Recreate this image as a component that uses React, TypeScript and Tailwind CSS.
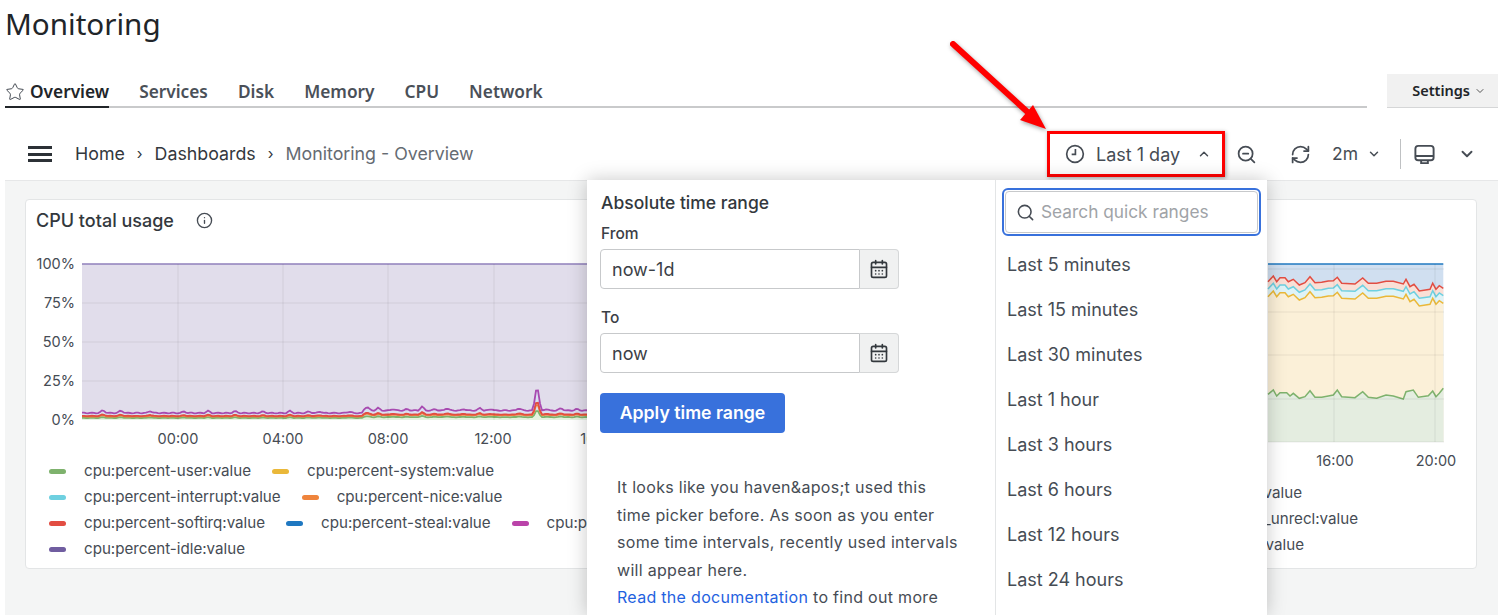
import React from 'react';
import { CalendarDays, ChevronDown, ChevronUp, Info, RefreshCw, Search, Star, ZoomOut } from 'lucide-react';

const tabs = ['Services', 'Disk', 'Memory', 'CPU', 'Network'];
const quickRanges = ['Last 5 minutes', 'Last 15 minutes', 'Last 30 minutes', 'Last 1 hour', 'Last 3 hours', 'Last 6 hours', 'Last 12 hours', 'Last 24 hours'];

const leftLegend = [
    ['#7eb26d', 'cpu:percent-user:value'],
    ['#eab839', 'cpu:percent-system:value'],
    ['#6ed0e0', 'cpu:percent-interrupt:value'],
    ['#ef843c', 'cpu:percent-nice:value'],
    ['#e24d42', 'cpu:percent-softirq:value'],
    ['#1f78c1', 'cpu:percent-steal:value'],
    ['#ba43a9', 'cpu:percent-wait:value'],
    ['#705da0', 'cpu:percent-idle:value'],
];

// bumps of the left chart: [x, height in px]
const bumps: [number, number][] = [
    [103, 3], [121, 2.5], [150, 2], [184, 1.5], [208, 2], [235, 2], [263, 1.5], [290, 2], [309, 1.5], [320, 1.5], [349, 1.5],
    [367, 4], [378, 2.5], [393, 1.5], [407, 1.5], [422, 4], [435, 1.5], [447, 2.5], [464, 1.5], [480, 2.5], [491, 1.5], [519, 2.5], [537, 27], [546, 1.5], [561, 2.5], [577, 1.5],
];

const heightAt = (x: number) => {
    const base = x < 363 ? 7 : 9.5;
    const jitter = 0.4 * Math.sin(x * 0.7);
    return bumps.reduce((h, [bx, bh]) => h + bh * Math.max(0, 1 - Math.abs(x - bx) / 4), base + jitter);
};

const xs: number[] = [];
for (let x = 82; x <= 745; x += 2) xs.push(x);

const line = (k: number) => xs.map((x) => `${x},${(420 - heightAt(x) * k).toFixed(1)}`).join(' ');
const area = (k: number) => `82,420 ${line(k)} 745,420`;

// right chart, traced in a 3x crop: [x, y] of the red and green series
const toPage = (pts: number[][], dy = 0) => pts.map(([x, y]) => `${(1260 + x / 3).toFixed(1)},${(240 + (y + dy) / 3).toFixed(1)}`).join(' ');
const redPts = [[24, 125], [40, 108], [50, 125], [60, 113], [75, 113], [85, 125], [100, 118], [118, 135], [135, 128], [150, 110], [165, 128], [185, 127], [205, 123], [220, 122], [232, 112], [245, 130], [285, 132], [308, 114], [325, 130], [350, 130], [378, 124], [400, 124], [430, 132], [438, 118], [450, 140], [462, 133], [478, 153], [510, 148], [518, 130], [528, 148], [538, 137], [550, 145]];
const greenPts = [[24, 463], [40, 450], [50, 468], [60, 458], [80, 458], [90, 468], [100, 460], [118, 475], [135, 470], [150, 452], [165, 472], [185, 472], [205, 468], [220, 465], [232, 450], [245, 470], [285, 473], [308, 455], [325, 472], [350, 475], [378, 465], [400, 468], [430, 477], [438, 455], [460, 450], [475, 472], [505, 467], [518, 453], [528, 470], [538, 460], [550, 445]];
const band = (pts: string) => `1268,442 ${pts} 1443.3,442`;

const ClockIcon = () => (
    <svg viewBox="0 0 24 24" fill="none" stroke="currentColor" strokeWidth="2" className="h-[20px] w-[20px]">
        <circle cx="12" cy="12" r="10" />
        <path d="M12.5 6v6.5H8" />
    </svg>
);

const PanelIcon = () => (
    <svg viewBox="0 0 24 24" fill="none" stroke="currentColor" strokeWidth="2" className="h-[23px] w-[23px]">
        <rect x="2.5" y="3" width="19" height="15" rx="3" />
        <path d="M2.5 13.5h19M8.5 18v3h7v-3" />
    </svg>
);

const LeftChart = () => (
    <svg viewBox="26 241 720 217" className="block h-[217px] w-[720px]">
        <rect x="82" y="264" width="663" height="156" fill="#e1ddeb" />
        <polygon points={area(1)} fill="#d9e0f1" />
        <polygon points={area(0.3)} fill="#e6f2e0" />
        <polyline points={line(0.3)} fill="none" stroke="#7eb26d" strokeWidth="1.8" />
        <polyline points={line(0.5)} fill="none" stroke="#ef843c" strokeWidth="1.8" />
        <polyline points={line(0.58)} fill="none" stroke="#e24d42" strokeWidth="1.8" />
        <polyline points={line(1)} fill="none" stroke="#a84ab0" strokeWidth="1.8" />
        <line x1="82" x2="745" y1="264" y2="264" stroke="#8f7fbb" strokeWidth="1.5" />
        {[303, 342, 381].map((y) => (
            <line key={y} x1="82" x2="745" y1={y} y2={y} stroke="#000" strokeOpacity="0.07" />
        ))}
        {[178, 283, 388, 494, 599, 704].map((x) => (
            <line key={x} x1={x} x2={x} y1="264" y2="420" stroke="#000" strokeOpacity="0.07" />
        ))}
        {[['100%', 264], ['75%', 303], ['50%', 342], ['25%', 381], ['0%', 420]].map(([t, y]) => (
            <text key={t} x="75" y={Number(y) + 5} textAnchor="end" fontSize="14.5" fill="#464c54">{t}</text>
        ))}
        {[['00:00', 178], ['04:00', 283], ['08:00', 388], ['12:00', 493], ['16:00', 599], ['20:00', 704]].map(([t, x]) => (
            <text key={t} x={x} y="444" textAnchor="middle" fontSize="14.5" fill="#464c54">{t}</text>
        ))}
    </svg>
);

const RightChart = () => (
    <svg viewBox="756 241 720 239" className="block h-[239px] w-[720px]">
        <rect x="1268" y="264" width="175.3" height="178" fill="#d0dff0" />
        <polygon points={band(toPage(redPts))} fill="#fadfd6" />
        <polygon points={band(toPage(redPts, 22))} fill="#dff3f7" />
        <polygon points={band(toPage(redPts, 45))} fill="#fbf0d8" />
        <polygon points={band(toPage(greenPts))} fill="#e4ede0" />
        <line x1="1268" x2="1443.3" y1="264" y2="264" stroke="#1f78c1" strokeWidth="1.5" />
        <polyline points={toPage(redPts)} fill="none" stroke="#e24d42" strokeWidth="1.5" />
        <polyline points={toPage(redPts, 22)} fill="none" stroke="#6ed0e0" strokeWidth="1.5" />
        <polyline points={toPage(redPts, 45)} fill="none" stroke="#eab839" strokeWidth="1.5" />
        <polyline points={toPage(greenPts)} fill="none" stroke="#7eb26d" strokeWidth="1.5" />
        {[269, 312, 355, 399, 442].map((y) => (
            <line key={y} x1="1268" x2="1444" y1={y} y2={y} stroke="#000" strokeOpacity="0.07" />
        ))}
        {[1334, 1435].map((x) => (
            <line key={x} x1={x} x2={x} y1="264" y2="442" stroke="#000" strokeOpacity="0.07" />
        ))}
        <text x="1335" y="466" textAnchor="middle" fontSize="14.5" fill="#464c54">16:00</text>
        <text x="1436" y="466" textAnchor="middle" fontSize="14.5" fill="#464c54">20:00</text>
    </svg>
);

const DateInput = ({ label, value }: { label: string; value: string }) => (
    <div>
        <div className="h-[29px] pl-px text-[15.5px] leading-[27px] font-medium text-[#3b4046]">{label}</div>
        <div className="flex h-10 w-[299px]">
            <div className="flex flex-1 items-center rounded-l-sm border border-[#c7c9cb] bg-white pl-[11px] text-[18px] text-[#3b4046]">{value}</div>
            <div className="flex w-[39px] items-center justify-center rounded-r-sm border border-l-0 border-[#d5d7d8] bg-[#f0f1f1]">
                <CalendarDays className="h-[20px] w-[20px] text-[#33383d]" strokeWidth={2} />
            </div>
        </div>
    </div>
);

const TimePicker = () => (
    <div className="absolute top-[180px] left-[587px] z-10 flex h-[435px] w-[680px] bg-white shadow-[0_0_18px_rgba(0,0,0,0.22)]">
        <div className="w-[408px] pt-[12px] pl-[13px]">
            <div className="pl-px text-[17.5px] leading-[22px] font-medium text-[#33383d]">Absolute time range</div>
            <div className="mt-[6px]"><DateInput label="From" value="now-1d" /></div>
            <div className="mt-[15px]"><DateInput label="To" value="now" /></div>
            <button className="mt-[20px] flex h-10 w-[185px] items-center justify-center rounded-sm bg-[#3871dc] text-[17.7px] font-semibold text-white">Apply time range</button>
            <p className="mt-[41px] pl-[17px] text-[16px] leading-[27.5px] tracking-[0.3px] whitespace-nowrap text-[#464c54]">
                {"It looks like you haven&apos;t used this"}<br />
                time picker before. As soon as you enter<br />
                some time intervals, recently used intervals<br />
                will appear here.<br />
                <span className="text-[#1f62e0]">Read the documentation</span> to find out more
            </p>
        </div>
        <div className="flex-1 border-l border-[#e3e5e6] pt-[8px] pl-[6px]">
            <div className="h-[48px] w-[259px] rounded-md border-2 border-[#3871dc] p-[1px]">
                <div className="flex h-full items-center gap-[6px] rounded-sm border border-[#c7c9cb] pl-[10px]">
                    <Search className="h-[19px] w-[19px] text-[#464c54]" strokeWidth={2} />
                    <span className="text-[17.3px] text-[#a0a3a7]">Search quick ranges</span>
                </div>
            </div>
            <div className="mt-[6px] text-[18px] text-[#464c54]">
                {quickRanges.map((r) => (
                    <div key={r} className="flex h-[45px] items-center pl-[5px]">{r}</div>
                ))}
            </div>
        </div>
    </div>
);

const Arrow = () => (
    <svg viewBox="0 0 110 100" className="absolute top-[36px] left-[945px] z-20 h-[100px] w-[110px] drop-shadow-[1px_2px_2px_rgba(0,0,0,0.35)]">
        <line x1="8" y1="8" x2="88" y2="81" stroke="#ff0000" strokeWidth="6" strokeLinecap="round" />
        <polygon points="101,93 88,69 75,84" fill="#ff0000" />
    </svg>
);

export default function App() {
    return (
        <div className="relative flex h-[615px] w-[1505px] flex-col overflow-hidden bg-white font-[Inter,sans-serif]">
            {/* page header */}
            <h1 className="h-[48px] pl-[5px] font-['Noto_Sans',sans-serif] text-[29.6px] leading-[48px] text-[#212529]">Monitoring</h1>
            <div className="flex h-[60px] items-end pr-[7px] pl-[5px] font-['Noto_Sans',sans-serif]">
                <div className="flex h-[34px] flex-1 gap-[30px] border-b-2 border-[#c9cacb] text-[17.3px] font-semibold">
                    <div className="-mb-[2px] flex items-center gap-[5px] border-b-2 border-[#212529] pt-[3px] text-[#212529]">
                        <Star className="h-5 w-5 text-[#464c54]" strokeWidth={1.2} />
                        Overview
                    </div>
                    {tabs.map((t) => (
                        <div key={t} className="flex items-center pt-[3px] text-[#4a5058]">{t}</div>
                    ))}
                </div>
                <button className="ml-[20px] flex h-[34px] w-[111px] items-center justify-end gap-[4px] border-b border-[#d5d6d7] bg-[#f1f1f1] pt-[1px] pr-[12px] text-[14.5px] font-semibold text-[#212529]">
                    Settings
                    <ChevronDown className="h-3 w-3 text-[#555]" />
                </button>
            </div>

            {/* grafana toolbar */}
            <div className="mt-[22px] flex h-[50px] items-center pb-[2px] text-[18px]">
                <div className="ml-[28px] flex w-[24px] flex-col gap-[3.5px]">
                    <div className="h-[3px] bg-[#2c3136]" />
                    <div className="h-[3px] bg-[#2c3136]" />
                    <div className="h-[3px] bg-[#2c3136]" />
                </div>
                <div className="ml-[23px] flex items-center gap-[12px] text-[17.8px] text-[#33383d]">
                    <span>Home</span>
                    <span className="text-[15px]">›</span>
                    <span>Dashboards</span>
                    <span className="text-[15px]">›</span>
                    <span className="text-[#656b72]">Monitoring - Overview</span>
                </div>
                <div className="ml-auto flex items-center text-[#464c54]">
                    <button className="flex h-[46px] w-[178px] items-center border-[3px] border-[#ff0000] pl-[15px] shadow-[1px_1px_4px_rgba(0,0,0,0.35)]">
                        <ClockIcon />
                        <span className="ml-[11px]">Last 1 day</span>
                        <ChevronUp className="ml-[17px] h-[14px] w-[14px]" strokeWidth={2.5} />
                    </button>
                    <ZoomOut className="ml-[11px] h-[21px] w-[21px]" strokeWidth={2} />
                    <RefreshCw className="ml-[33px] h-[21px] w-[21px]" strokeWidth={2} />
                    <span className="ml-[21px] text-[17.5px]">2m</span>
                    <ChevronDown className="ml-[9px] h-[14px] w-[14px]" strokeWidth={2.5} />
                    <div className="ml-[19px] h-[30px] w-px bg-[#bfc1c3]" />
                    <div className="ml-[12px]"><PanelIcon /></div>
                    <ChevronDown className="mr-[29px] ml-[22px] h-[18px] w-[18px]" strokeWidth={2.5} />
                </div>
            </div>

            {/* dashboard */}
            <div className="mr-[7px] ml-[5px] flex-1 border-t border-[#e6e7e8] bg-[#f4f5f5] pt-[18px] pr-[21px] pl-[20px]">
                <div className="grid h-[370px] grid-cols-2 gap-2">
                    <div className="rounded-sm border border-[#e3e5e6] bg-white">
                        <div className="flex h-[41px] items-center gap-[22px] pl-[10px] text-[18px] font-medium text-[#33383d]">
                            CPU total usage
                            <Info className="h-[17px] w-[17px] text-[#464c54]" strokeWidth={1.9} />
                        </div>
                        <LeftChart />
                        <div className="flex flex-wrap pr-[5px] pl-[23px] text-[15.15px] text-[#464c54]">
                            {leftLegend.map(([c, t]) => (
                                <div key={t} className="mr-[21px] flex h-[26px] items-center gap-[18px]">
                                    <div className="h-[5px] w-[17px] rounded-full" style={{ backgroundColor: c }} />
                                    {t}
                                </div>
                            ))}
                        </div>
                    </div>
                    <div className="rounded-sm border border-[#e3e5e6] bg-white">
                        <div className="h-[41px]" />
                        <RightChart />
                        <div className="text-right text-[15.15px] leading-[26px] text-[#464c54]">
                            <div className="w-[546px]">mem:memory-used:value</div>
                            <div className="w-[602px]">mem:memory-slab_unrecl:value</div>
                            <div className="w-[548px]">mem:memory-buffered:value</div>
                        </div>
                    </div>
                </div>
            </div>

            <TimePicker />
            <Arrow />
        </div>
    );
}
